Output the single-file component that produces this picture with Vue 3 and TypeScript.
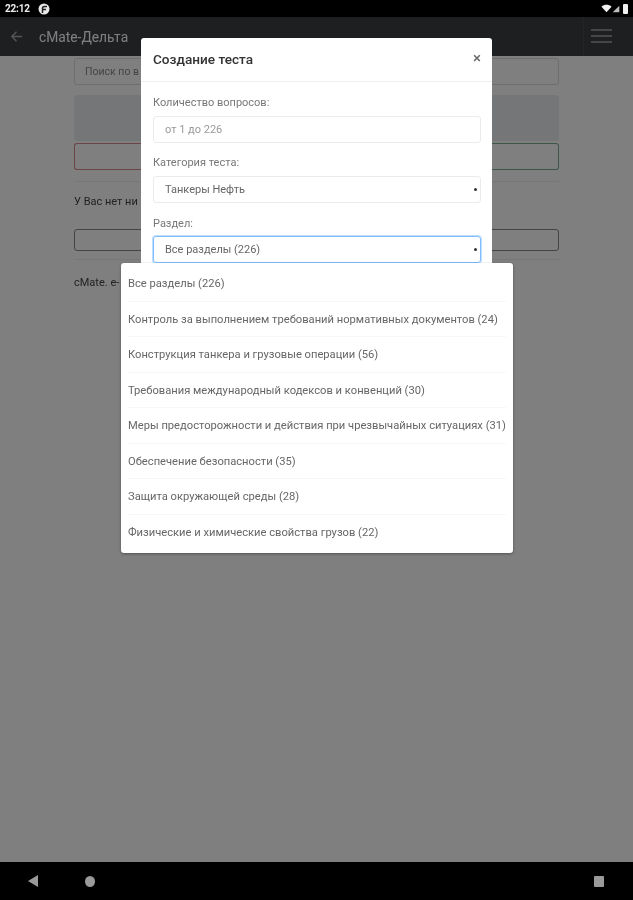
<script setup lang="ts">
const sections = [
  'Все разделы (226)',
  'Контроль за выполнением требований нормативных документов (24)',
  'Конструкция танкера и грузовые операции (56)',
  'Требования международный кодексов и конвенций (30)',
  'Меры предосторожности и действия при чрезвычайных ситуациях (31)',
  'Обеспечение безопасности (35)',
  'Защита окружающей среды (28)',
  'Физические и химические свойства грузов (22)',
]
</script>

<template>
  <div class="screen">
    <!-- Status bar -->
    <div class="status">
      <span class="status-time">22:12</span>
      <svg class="status-app" viewBox="0 0 12 12">
        <circle cx="6" cy="6" r="5.500" fill="#e8e8e8" />
        <path d="M4.500 10V5.500Q4.500 3.500 6.500 3.500H9M4.500 6.500H8" stroke="#222" stroke-width="1.5" fill="none" />
      </svg>
      <span class="status-fill" />
      <svg class="status-icon" viewBox="0 0 24 18" fill="#f2f2f2">
        <path d="M12 17 1 5c6-5.500 16-5.500 22 0z" />
      </svg>
      <svg class="status-signal" viewBox="0 0 12 12" fill="#bdbdbd">
        <path d="M11 1v10H1z" />
      </svg>
      <span class="status-battery" />
    </div>

    <!-- App bar -->
    <header class="appbar">
      <svg class="appbar-back" viewBox="0 0 14 14" fill="none" stroke="#a8abad" stroke-width="1.5">
        <path d="M13 7H2M7 2 2 7l5 5" />
      </svg>
      <span class="appbar-title">cMate-Дельта</span>
      <span class="appbar-fill" />
      <button class="appbar-menu" aria-label="Меню">
        <span /><span /><span />
      </button>
    </header>

    <!-- Page behind the overlay -->
    <main class="page">
      <input class="page-search" placeholder="Поиск по в" />
      <div class="page-banner" />
      <div class="page-buttons">
        <div class="page-btn page-btn--red" />
        <div class="page-btn page-btn--green" />
      </div>
      <hr class="page-rule" />
      <p class="page-text page-text--first">У Вас нет ни</p>
      <div class="page-box" />
      <hr class="page-rule page-rule--second" />
      <p class="page-text page-text--last">cMate. e-</p>
    </main>

    <!-- Bottom navigation -->
    <footer class="navbar">
      <svg class="nav-back" viewBox="0 0 10 12" fill="#9a9a9a"><path d="M10 0v12L0 6z" /></svg>
      <span class="nav-home" />
      <span class="navbar-fill" />
      <span class="nav-recent" />
    </footer>

    <div class="overlay" />

    <!-- Create-test dialog -->
    <section class="dialog">
      <div class="dialog-head">
        <span class="dialog-title">Создание теста</span>
        <span class="dialog-close">×</span>
      </div>
      <div class="dialog-body">
        <label class="field-label">Количество вопросов:</label>
        <div class="field field--input">от 1 до 226</div>
        <label class="field-label">Категория теста:</label>
        <div class="field">Танкеры Нефть<i class="field-arrow" /></div>
        <label class="field-label field-label--last">Раздел:</label>
        <div class="field field--focus">Все разделы (226)<i class="field-arrow" /></div>
      </div>
    </section>

    <!-- Opened select -->
    <ul class="menu">
      <li v-for="item in sections" :key="item" class="menu-item">{{ item }}</li>
    </ul>
  </div>
</template>

<style scoped>
.screen {
  position: relative;
  display: flex;
  flex-direction: column;
  width: 633px;
  height: 900px;
  overflow: hidden;
  background: #fff;
  font-family: Roboto, "Liberation Sans", sans-serif;
  filter: blur(0.6px);
}
.status {
  display: flex;
  align-items: center;
  height: 17px;
  padding: 0 5px;
  background: #000;
  color: #ececec;
  z-index: 3;
}
.status-time {
  font-size: 10px;
  font-weight: 700;
  letter-spacing: -0.2px;
}
.status-app {
  width: 12px;
  height: 12px;
  margin-left: 8px;
}
.status-fill,
.appbar-fill,
.navbar-fill {
  flex: 1;
}
.status-icon {
  width: 11px;
  height: 9px;
}
.status-signal {
  width: 8px;
  height: 8px;
}
.status-battery {
  width: 5px;
  height: 10px;
  margin-left: 3px;
  border-radius: 1px;
  background: #f0f0f0;
}
.appbar {
  display: flex;
  align-items: center;
  height: 39px;
  padding: 0 0 0 10px;
  background: #3a3e42;
}
.appbar-back {
  width: 13px;
  height: 13px;
}
.appbar-title {
  margin-left: 16px;
  color: #fff;
  font-size: 13.8px;
}
.appbar-menu {
  display: flex;
  flex-direction: column;
  gap: 4px;
  box-sizing: border-box;
  width: 36px;
  height: 39px;
  margin-right: 14px;
  padding: 12px 7px 0;
  border: 0;
  border-left: 1px solid #44484c;
  background: none;
}
.appbar-menu span {
  display: block;
  height: 2px;
  background: #8a8c8e;
}
.page {
  flex: 1;
  display: flex;
  flex-direction: column;
  padding: 2px 74px 0;
}
.page-search {
  flex: none;
  box-sizing: border-box;
  height: 27px;
  padding: 0 10px;
  border: 1px solid #ddd;
  border-radius: 3px;
  font: 10.5px Roboto, sans-serif;
  color: #666;
}
.page-search::placeholder {
  color: #888;
}
.page-banner {
  height: 46px;
  margin-top: 10px;
  border-radius: 3px;
  background: #e9ecef;
}
.page-buttons {
  display: flex;
  height: 27px;
  margin-top: 2px;
}
.page-btn {
  flex: 1;
  border: 1px solid;
}
.page-btn--red {
  border-color: #d88a92;
  border-right: 0;
  border-radius: 3px 0 0 3px;
}
.page-btn--green {
  border-color: #78ad90;
  border-left: 0;
  border-radius: 0 3px 3px 0;
}
.page-rule {
  width: 100%;
  margin: 11px 0 0;
  border: 0;
  border-top: 1px solid #eee;
}
.page-rule--second {
  margin-top: 8px;
}
.page-text {
  margin: 0;
  font-size: 11px;
  line-height: 14px;
  color: #444;
}
.page-text--first {
  margin-top: 13px;
}
.page-text--last {
  margin-top: 16px;
}
.page-box {
  height: 22px;
  margin-top: 20px;
  border: 1px solid #888;
  border-radius: 3px;
  box-sizing: border-box;
}
.navbar {
  display: flex;
  align-items: center;
  height: 38px;
  padding: 0 29px 0 28px;
  background: #000;
  z-index: 3;
}
.nav-back {
  width: 10px;
  height: 12px;
}
.nav-home {
  width: 10px;
  height: 11px;
  margin-left: 47px;
  border-radius: 50%;
  background: #9a9a9a;
}
.nav-recent {
  width: 10px;
  height: 11px;
  border-radius: 1px;
  background: #9a9a9a;
}
.overlay {
  position: absolute;
  inset: 17px 0 38px;
  background: rgba(0, 0, 0, 0.5);
}
.dialog {
  position: absolute;
  top: 38px;
  left: 141px;
  width: 351px;
  height: 262px;
  border-radius: 3px;
  background: #fff;
}
.dialog-head {
  display: flex;
  align-items: center;
  justify-content: space-between;
  box-sizing: border-box;
  height: 44px;
  padding: 0 11px 2px 12px;
  border-bottom: 1px solid #eee;
}
.dialog-title {
  font-size: 13.6px;
  font-weight: 500;
  color: #333;
}
.dialog-close {
  font-size: 15px;
  font-weight: 500;
  color: #666;
  line-height: 1;
}
.dialog-body {
  display: flex;
  flex-direction: column;
  padding: 14px 11px 0 12px;
}
.field-label {
  height: 20px;
  font-size: 11px;
  line-height: 14px;
  color: #777;
}
.field-label--last {
  padding-top: 1px;
  height: 19px;
}
.field {
  position: relative;
  box-sizing: border-box;
  height: 27px;
  margin-bottom: 13px;
  padding-left: 11px;
  border: 1px solid #e9ebed;
  border-radius: 3px;
  font-size: 11px;
  line-height: 25px;
  color: #666;
}
.field--input {
  color: #999;
}
.field--focus {
  border-color: #80bdff;
  box-shadow: 0 0 0 1px rgba(128, 189, 255, 0.5);
}
.field-arrow {
  position: absolute;
  top: 11px;
  right: 3px;
  width: 3px;
  height: 3px;
  border-radius: 50%;
  background: #333;
}
.menu {
  position: absolute;
  top: 263px;
  left: 121px;
  width: 392px;
  margin: 0;
  padding: 3px 0 3px;
  list-style: none;
  border-radius: 3px;
  background: #fff;
  box-shadow: 0 1px 3px rgba(0, 0, 0, 0.35);
}
.menu-item {
  height: 35.5px;
  margin: 0 7px;
  box-sizing: border-box;
  border-bottom: 1px solid #f7f7f7;
  font-size: 11.18px;
  line-height: 35px;
  white-space: nowrap;
  color: #666;
}
.menu-item:last-child {
  border-bottom: 0;
}
</style>
